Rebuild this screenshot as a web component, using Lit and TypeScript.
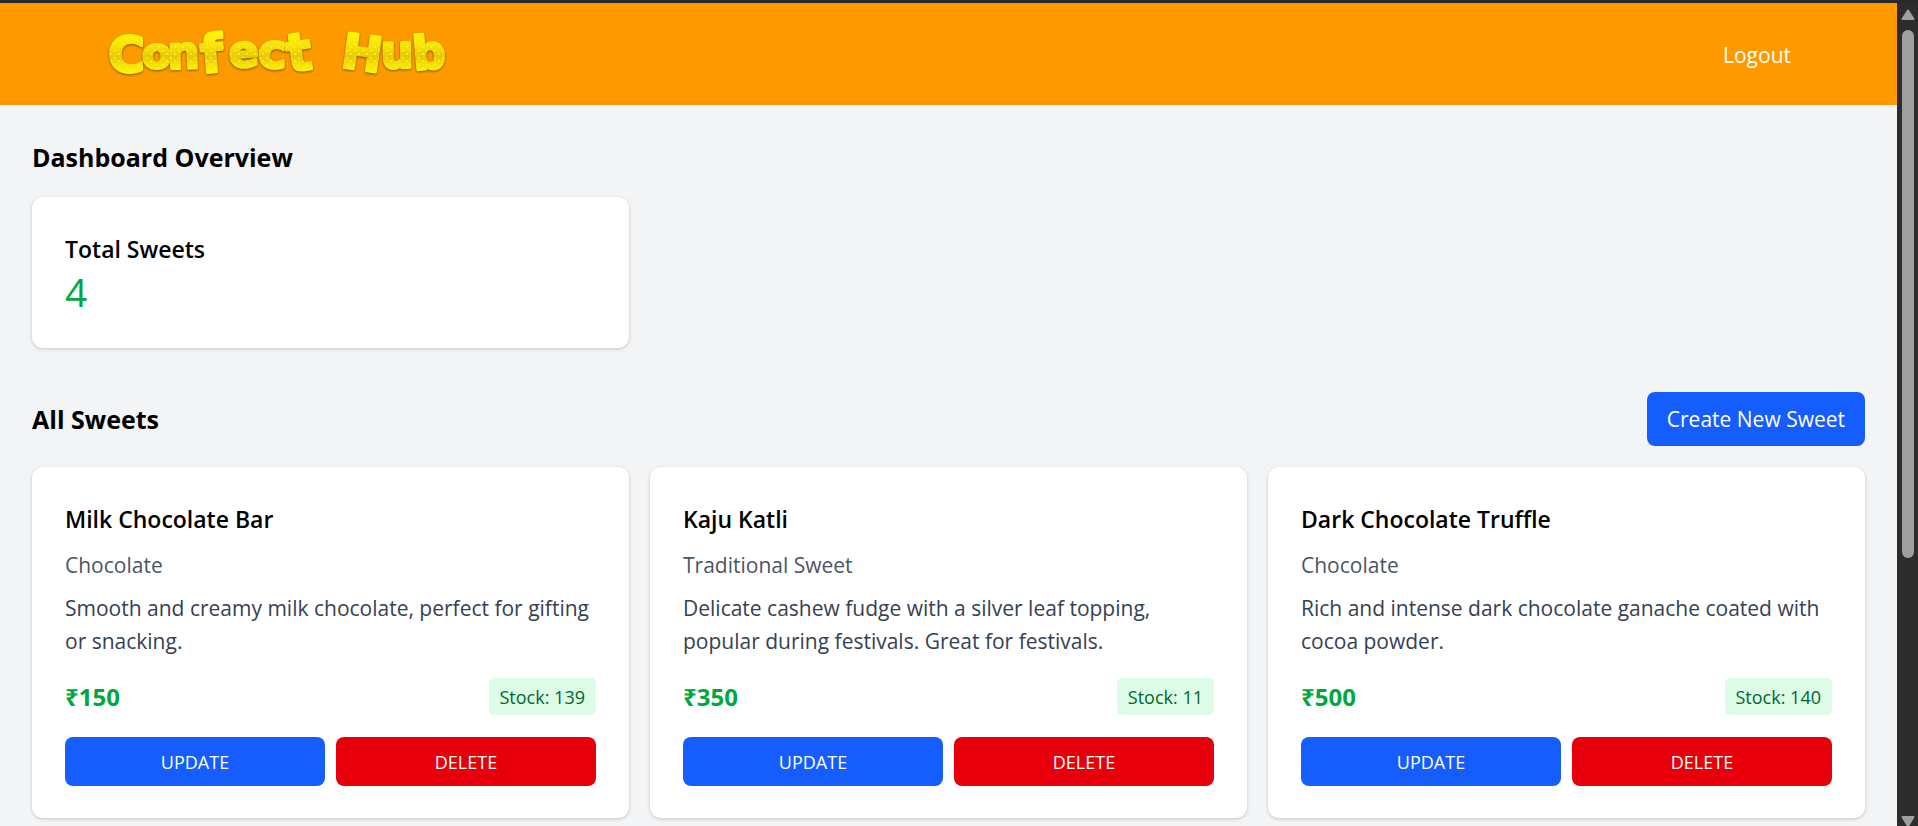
import { LitElement, html, svg, css } from "lit";
import { customElement, property } from "lit/decorators.js";

interface Sweet {
  name: string;
  category: string;
  description: string;
  price: number;
  stock: number;
}

const SWEETS: Sweet[] = [
  {
    name: "Milk Chocolate Bar",
    category: "Chocolate",
    description: "Smooth and creamy milk chocolate, perfect for gifting or snacking.",
    price: 150,
    stock: 139,
  },
  {
    name: "Kaju Katli",
    category: "Traditional Sweet",
    description: "Delicate cashew fudge with a silver leaf topping, popular during festivals. Great for festivals.",
    price: 350,
    stock: 11,
  },
  {
    name: "Dark Chocolate Truffle",
    category: "Chocolate",
    description: "Rich and intense dark chocolate ganache coated with cocoa powder.",
    price: 500,
    stock: 140,
  },
];

// The wordmark's bouncing letters: character, x, baseline, size, tilt.
const LETTERS: [string, number, number, number, number][] = [
  ["C", 1, 41, 50, 0],
  ["o", 35, 37, 43, 0],
  ["n", 61, 38, 45, -2],
  ["f", 95, 42, 52, -5],
  ["e", 123, 37, 44, -5],
  ["c", 151, 37, 48, 0],
  ["t", 182, 41, 52, -8],
  [" ", 214, 37, 44, 0],
  ["H", 233, 36, 48, 8],
  ["u", 274, 37, 46, -1],
  ["b", 307, 39, 46, -5],
];

@customElement("brand-logo")
class BrandLogo extends LitElement {
  static styles = css`
    :host {
      display: block;
      line-height: 0;
    }
    .word {
      font-family: "DejaVu Sans", sans-serif;
      font-weight: 700;
      fill: url(#candy);
      stroke: url(#candy);
      stroke-width: 3px;
      stroke-linejoin: round;
      white-space: pre;
      filter: drop-shadow(0 1px 1px #7a5600);
    }
  `;

  render() {
    return html`
      <svg width="344" height="46" viewBox="0 0 344 46" overflow="visible" role="img" aria-label="Confect Hub">
        <defs>
          <linearGradient id="gold" gradientUnits="userSpaceOnUse" x1="0" y1="13" x2="0" y2="54">
            <stop offset="0" stop-color="#fff500" />
            <stop offset="0.3" stop-color="#f7e205" />
            <stop offset="0.56" stop-color="#e6c806" />
            <stop offset="0.74" stop-color="#f5e102" />
            <stop offset="1" stop-color="#fffb00" />
          </linearGradient>
          <pattern id="sugar" width="8" height="7" patternUnits="userSpaceOnUse">
            <circle cx="2" cy="2" r="0.9" fill="#fbe94a" />
            <circle cx="6" cy="5" r="0.9" fill="#fbe94a" />
          </pattern>
          <pattern id="candy" x="-10" y="-10" width="380" height="70" patternUnits="userSpaceOnUse">
            <rect width="380" height="70" fill="url(#gold)" />
            <rect width="380" height="70" fill="url(#sugar)" />
          </pattern>
        </defs>
        <text class="word">${LETTERS.map(
          ([ch, x, y, size, tilt]) =>
            svg`<tspan x=${x} y=${y} font-size=${size} rotate=${tilt}>${ch}</tspan>`
        )}</text>
      </svg>
    `;
  }
}

@customElement("sweet-card")
class SweetCard extends LitElement {
  @property({ attribute: false }) sweet!: Sweet;

  static styles = css`
    :host {
      display: flex;
      flex-direction: column;
      padding: 33px 33px 32px;
      border-radius: 11px;
      background: #fff;
      box-shadow: 0 1px 4px rgb(0 0 0 / 10%), 0 1px 3px rgb(0 0 0 / 10%);
    }
    h3,
    p {
      margin: 0;
    }
    .name {
      font-size: 23px;
      line-height: 38px;
      font-weight: 600;
      color: #000;
    }
    .category {
      margin-top: 11px;
      line-height: 33px;
      color: #4a5565;
    }
    .description {
      margin-top: 10px;
      line-height: 33px;
      color: #364153;
    }
    .facts {
      display: flex;
      align-items: center;
      justify-content: space-between;
      margin-top: 20px;
    }
    .price {
      font-size: 24px;
      line-height: 37px;
      font-weight: 700;
      color: #00a63e;
    }
    .stock {
      padding: 5px 11px 3px;
      border-radius: 5px;
      background: #dcfce7;
      color: #016630;
      font-size: 18px;
      line-height: 29px;
    }
    .actions {
      display: grid;
      grid-template-columns: 1fr 1fr;
      gap: 11px;
      margin-top: 22px;
    }
    button {
      padding: 12px 11px 10px;
      border: 0;
      border-radius: 8px;
      color: #fff;
      font: inherit;
      font-size: 18px;
      line-height: 27px;
      cursor: pointer;
    }
    .update {
      background: #155dfc;
    }
    .delete {
      background: #e7000b;
    }
  `;

  render() {
    const s = this.sweet;
    return html`
      <h3 class="name">${s.name}</h3>
      <p class="category">${s.category}</p>
      <p class="description">${s.description}</p>
      <div class="facts">
        <span class="price">₹${s.price}</span>
        <span class="stock">Stock: ${s.stock}</span>
      </div>
      <div class="actions">
        <button type="button" class="update">UPDATE</button>
        <button type="button" class="delete">DELETE</button>
      </div>
    `;
  }
}

@customElement("scroll-rail")
class ScrollRail extends LitElement {
  static styles = css`
    :host {
      display: flex;
      flex-direction: column;
      align-items: center;
      gap: 10px;
      padding-top: 6px;
      background: #2c2c2c;
    }
    svg {
      display: block;
      fill: #9f9f9f;
      stroke: #9f9f9f;
      stroke-width: 2;
      stroke-linejoin: round;
    }
    .track {
      flex: 1;
      width: 12px;
    }
    .thumb {
      height: 68%;
      border-radius: 6px;
      background: #9f9f9f;
    }
  `;

  render() {
    return html`
      <svg width="14" height="11" viewBox="0 0 14 11" aria-hidden="true"><path d="M7 1.5 12.5 10h-11z" /></svg>
      <div class="track"><div class="thumb"></div></div>
      <svg width="14" height="10" viewBox="0 0 14 10" aria-hidden="true"><path d="M1.5 1h11L7 10z" /></svg>
    `;
  }
}

@customElement("app-root")
class AppRoot extends LitElement {
  static styles = css`
    :host {
      display: grid;
      grid-template-columns: minmax(0, 1fr) 21px;
      box-sizing: border-box;
      height: 100vh;
      overflow: hidden;
      border-top: 3px solid #2a2a2a;
      background: #f3f4f6;
      color: #000;
      font-family: "Open Sans", "Noto Sans", sans-serif;
      font-size: 21px;
      line-height: 33px;
    }
    .page {
      min-width: 0;
      overflow: hidden;
    }
    .topbar {
      display: flex;
      align-items: center;
      justify-content: space-between;
      padding: 28px 106px 28px 107px;
      background: #fe9a00;
    }
    .logout {
      padding-top: 2px;
      color: #fff;
      text-decoration: none;
    }
    main {
      padding: 34px 32px;
    }
    h2,
    h3,
    p {
      margin: 0;
    }
    h2 {
      font-size: 25px;
      line-height: 37px;
      font-weight: 700;
    }
    .cards {
      display: grid;
      grid-template-columns: repeat(3, minmax(0, 1fr));
      gap: 21px;
      margin-top: 21px;
    }
    .total {
      padding: 33px 33px 32px;
      border-radius: 11px;
      background: #fff;
      box-shadow: 0 1px 4px rgb(0 0 0 / 10%), 0 1px 3px rgb(0 0 0 / 10%);
    }
    .label {
      font-size: 23px;
      line-height: 38px;
      font-weight: 600;
    }
    .count {
      font-size: 39px;
      line-height: 48px;
      color: #00a63e;
    }
    .section-head {
      display: flex;
      align-items: center;
      justify-content: space-between;
      margin-top: 44px;
    }
    .create {
      padding: 11px 20px;
      border: 0;
      border-radius: 8px;
      background: #155dfc;
      color: #fff;
      font: inherit;
      line-height: 32px;
      cursor: pointer;
    }
  `;

  render() {
    return html`
      <div class="page">
        <header class="topbar">
          <brand-logo></brand-logo>
          <a class="logout" href="#logout">Logout</a>
        </header>
        <main>
          <section>
            <h2>Dashboard Overview</h2>
            <div class="cards">
              <div class="total">
                <h3 class="label">Total Sweets</h3>
                <p class="count">4</p>
              </div>
            </div>
          </section>
          <section>
            <div class="section-head">
              <h2>All Sweets</h2>
              <button type="button" class="create">Create New Sweet</button>
            </div>
            <div class="cards">
              ${SWEETS.map((s) => html`<sweet-card .sweet=${s}></sweet-card>`)}
            </div>
          </section>
        </main>
      </div>
      <scroll-rail></scroll-rail>
    `;
  }
}
